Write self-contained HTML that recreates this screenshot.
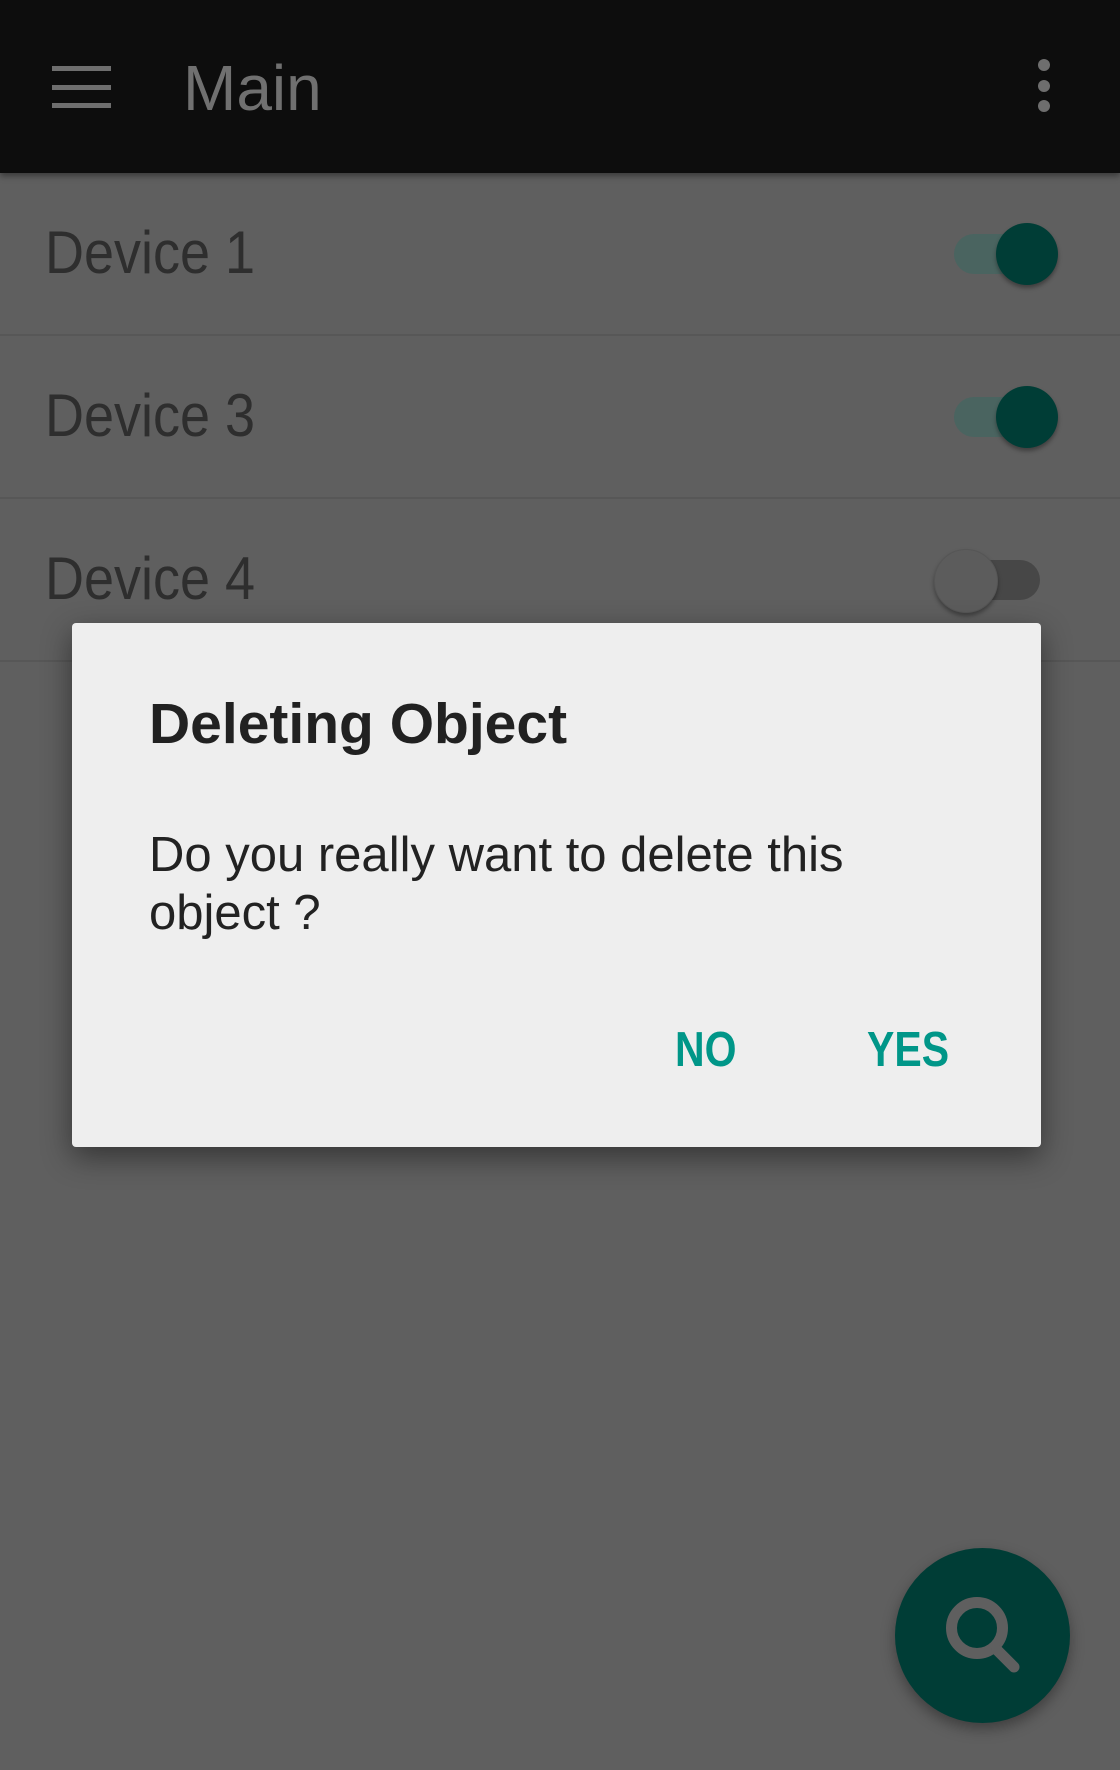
<!DOCTYPE html>
<html><head><meta charset="utf-8"><style>
html,body{margin:0;padding:0}
body{width:1120px;height:1770px;background:#5f5f5f;position:relative;overflow:hidden;font-family:"Liberation Sans",sans-serif}
.bar{position:absolute;left:0;top:0;width:1120px;height:173px;background:#0d0d0d;box-shadow:0 3px 6px rgba(0,0,0,.4)}
.ham{position:absolute;left:52px;width:59px;height:5px;background:#6e6e6e}
.dot{position:absolute;left:1038px;width:12px;height:12px;border-radius:50%;background:#6e6e6e}
.title{position:absolute;left:183px;top:56px;font-size:64px;color:#707070;line-height:64px}
.row{position:absolute;left:0;width:1120px;height:161px;border-bottom:2px solid #575757}
.row span{position:absolute;left:45px;top:50px;font-size:54px;color:#2e2e2e;line-height:60px;transform:scaleY(1.12);transform-origin:left center}
.track{position:absolute;width:100px;height:40px;border-radius:20px}
.thumb{position:absolute;width:62px;height:62px;border-radius:50%;box-shadow:0 3px 4px rgba(0,0,0,.35)}
.dlg{position:absolute;left:72px;top:623px;width:969px;height:524px;background:#eeeeee;border-radius:4px;box-shadow:0 10px 30px rgba(0,0,0,.45)}
.dt{position:absolute;left:77px;top:71px;font-size:57px;font-weight:bold;color:#212121;line-height:60px}
.db{position:absolute;left:77px;top:203px;font-size:49px;color:#222;line-height:58px;width:820px}
.btn{position:absolute;top:401px;font-size:41px;font-weight:bold;color:#009688;line-height:50px;transform:scaleY(1.2)}
.fab{position:absolute;left:895px;top:1548px;width:175px;height:175px;border-radius:50%;background:#003d36;box-shadow:0 6px 14px rgba(0,0,0,.35)}
</style></head><body>
<div class="bar">
<div class="ham" style="top:66px"></div><div class="ham" style="top:85px"></div><div class="ham" style="top:103px"></div>
<div class="title">Main</div>
<div class="dot" style="top:59px"></div><div class="dot" style="top:80px"></div><div class="dot" style="top:100px"></div>
</div>
<div class="row" style="top:173px"><span>Device 1</span>
<div class="track" style="left:954px;top:61px;background:#4a6460"></div><div class="thumb" style="left:996px;top:50px;background:#003d36"></div></div>
<div class="row" style="top:336px"><span>Device 3</span>
<div class="track" style="left:954px;top:61px;background:#4a6460"></div><div class="thumb" style="left:996px;top:50px;background:#003d36"></div></div>
<div class="row" style="top:499px"><span>Device 4</span>
<div class="track" style="left:950px;top:61px;width:90px;background:#474747"></div><div class="thumb" style="left:934px;top:50px;background:#5c5c5c;border:1px solid #565656"></div></div>
<div class="dlg">
<div class="dt">Deleting Object</div>
<div class="db">Do you really want to delete this object ?</div>
<div class="btn" style="left:603px">NO</div>
<div class="btn" style="left:795px">YES</div>
</div>
<div class="fab"><svg width="175" height="175" viewBox="0 0 175 175">
<circle cx="82" cy="80" r="25.5" fill="none" stroke="#5f5f5f" stroke-width="11"/>
<line x1="102" y1="102" x2="119" y2="119" stroke="#5f5f5f" stroke-width="11" stroke-linecap="round"/>
</svg></div>
</body></html>
